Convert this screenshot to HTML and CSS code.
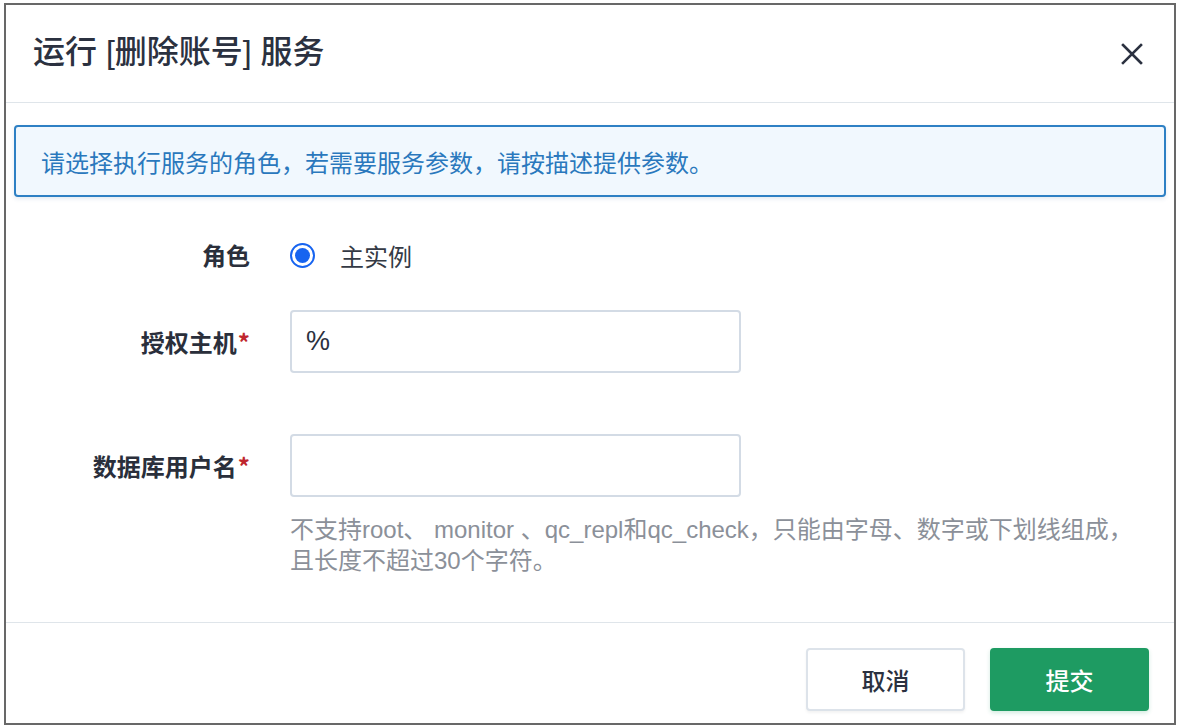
FILE: index.html
```html
<!DOCTYPE html>
<html lang="zh-CN">

<head>
    <meta charset="UTF-8">
    <title>运行服务</title>
    <link rel="stylesheet" href="styles.css">
</head>

<body>
    <div class="dialog">
        <div class="dialog-head">
            <h2 class="dialog-title">运行 [删除账号] 服务</h2>
            <span class="close-btn">
                <svg width="22" height="22" viewBox="0 0 22 22">
                    <path d="M2 2 L20 20 M20 2 L2 20" stroke="#2b3140" stroke-width="2.6" stroke-linecap="square" fill="none"/>
                </svg>
            </span>
        </div>

        <div class="dialog-body">
            <div class="alert">请选择执行服务的角色，若需要服务参数，请按描述提供参数。</div>

            <div class="form">
                <div class="form-row row-role">
                    <label class="form-label">角色</label>
                    <div class="form-ctrl">
                        <span class="radio"><span class="radio-dot"></span></span>
                        <span class="radio-text">主实例</span>
                    </div>
                </div>

                <div class="form-row row-host">
                    <label class="form-label">授权主机<span class="req">*</span></label>
                    <div class="form-ctrl">
                        <input class="text-input" type="text" value="%">
                    </div>
                </div>

                <div class="form-row row-user">
                    <label class="form-label">数据库用户名<span class="req">*</span></label>
                    <div class="form-ctrl">
                        <input class="text-input" type="text">
                        <p class="help">不支持root、 monitor 、qc_repl和qc_check，只能由字母、数字或下划线组成，且长度不超过30个字符。</p>
                    </div>
                </div>
            </div>
        </div>

        <div class="dialog-foot">
            <button class="btn btn-cancel">取消</button>
            <button class="btn btn-submit">提交</button>
        </div>
    </div>
</body>

</html>
```

FILE: styles.css
```css
body {
    margin: 0;
    background: #fff;
    font-family: "Noto Sans CJK SC", "Noto Sans", sans-serif;
}

.dialog {
    margin: 3px 0 0 4px;
    width: 1168px;
    height: 718px;
    border: 2px solid #686868;
    display: flex;
    flex-direction: column;
    overflow: hidden;
}

/* head */
.dialog-head {
    height: 97px;
    flex-shrink: 0;
    border-bottom: 1px solid #dfe5ea;
    display: flex;
    align-items: center;
    justify-content: space-between;
    padding: 0 31px 0 27px;
}

.dialog-title {
    margin: 0;
    font-family: "Liberation Sans", "Noto Sans CJK SC", sans-serif;
    font-size: 32px;
    font-weight: 500;
    color: #2b3140;
    position: relative;
    top: -5px;
}

.close-btn {
    display: flex;
    width: 22px;
    height: 22px;
}

/* body */
.dialog-body {
    flex: 1;
    padding: 22px 8px 0 8px;
}

.alert {
    height: 68px;
    border: 2px solid #2e80c4;
    border-radius: 4px;
    background: #f1f8fe;
    box-shadow: 0 2px 4px rgba(40, 90, 140, 0.12);
    color: #2a78bd;
    font-size: 24px;
    display: flex;
    align-items: center;
    padding-left: 25px;
}

.form {
    padding-top: 38px;
}

.form-row {
    display: flex;
    align-items: flex-start;
}

.form-label {
    width: 236px;
    flex-shrink: 0;
    text-align: right;
    font-size: 24px;
    font-weight: 700;
    color: #2a2f3b;
    line-height: 40px;
}

.req {
    color: #c0272d;
    margin-left: 1px;
}

.form-ctrl {
    margin-left: 40px;
}

.row-role .form-ctrl {
    display: flex;
    align-items: center;
    height: 40px;
}

.radio {
    width: 25px;
    height: 25px;
    box-sizing: border-box;
    border: 2px solid #1764f0;
    border-radius: 50%;
    display: flex;
    align-items: center;
    justify-content: center;
}

.radio-dot {
    width: 15px;
    height: 15px;
    border-radius: 50%;
    background: #1764f0;
}

.radio-text {
    margin-left: 25px;
    font-size: 24px;
    color: #343a45;
}

.row-host {
    margin-top: 35px;
}

.row-host .form-label,
.row-user .form-label {
    line-height: 63px;
}

.row-user {
    margin-top: 61px;
}

.text-input {
    display: block;
    box-sizing: border-box;
    width: 451px;
    height: 63px;
    border: 2px solid #d3dbe5;
    border-radius: 4px;
    padding: 0 14px;
    font-family: "Liberation Sans", sans-serif;
    font-size: 27px;
    color: #2b3140;
    outline: none;
}

.help {
    margin: 17px 0 0 0;
    width: 860px;
    font-family: "Liberation Sans", "Noto Sans CJK SC", sans-serif;
    font-size: 24px;
    line-height: 31px;
    color: #8b9099;
}

/* foot */
.dialog-foot {
    height: 101px;
    flex-shrink: 0;
    border-top: 1px solid #dfe5ea;
    display: flex;
    justify-content: flex-end;
    align-items: flex-start;
    padding: 25px 25px 0 0;
    box-sizing: border-box;
    gap: 25px;
}

.btn {
    width: 159px;
    height: 63px;
    border-radius: 4px;
    font-family: inherit;
    font-size: 24px;
    font-weight: 500;
}

.btn-cancel {
    background: #fff;
    border: 2px solid #dde3ea;
    color: #2b3140;
    box-shadow: 0 2px 3px rgba(0, 0, 0, 0.05);
}

.btn-submit {
    background: #1e9b62;
    border: none;
    color: #fff;
    box-shadow: 0 2px 4px rgba(30, 155, 98, 0.2);
}
```
